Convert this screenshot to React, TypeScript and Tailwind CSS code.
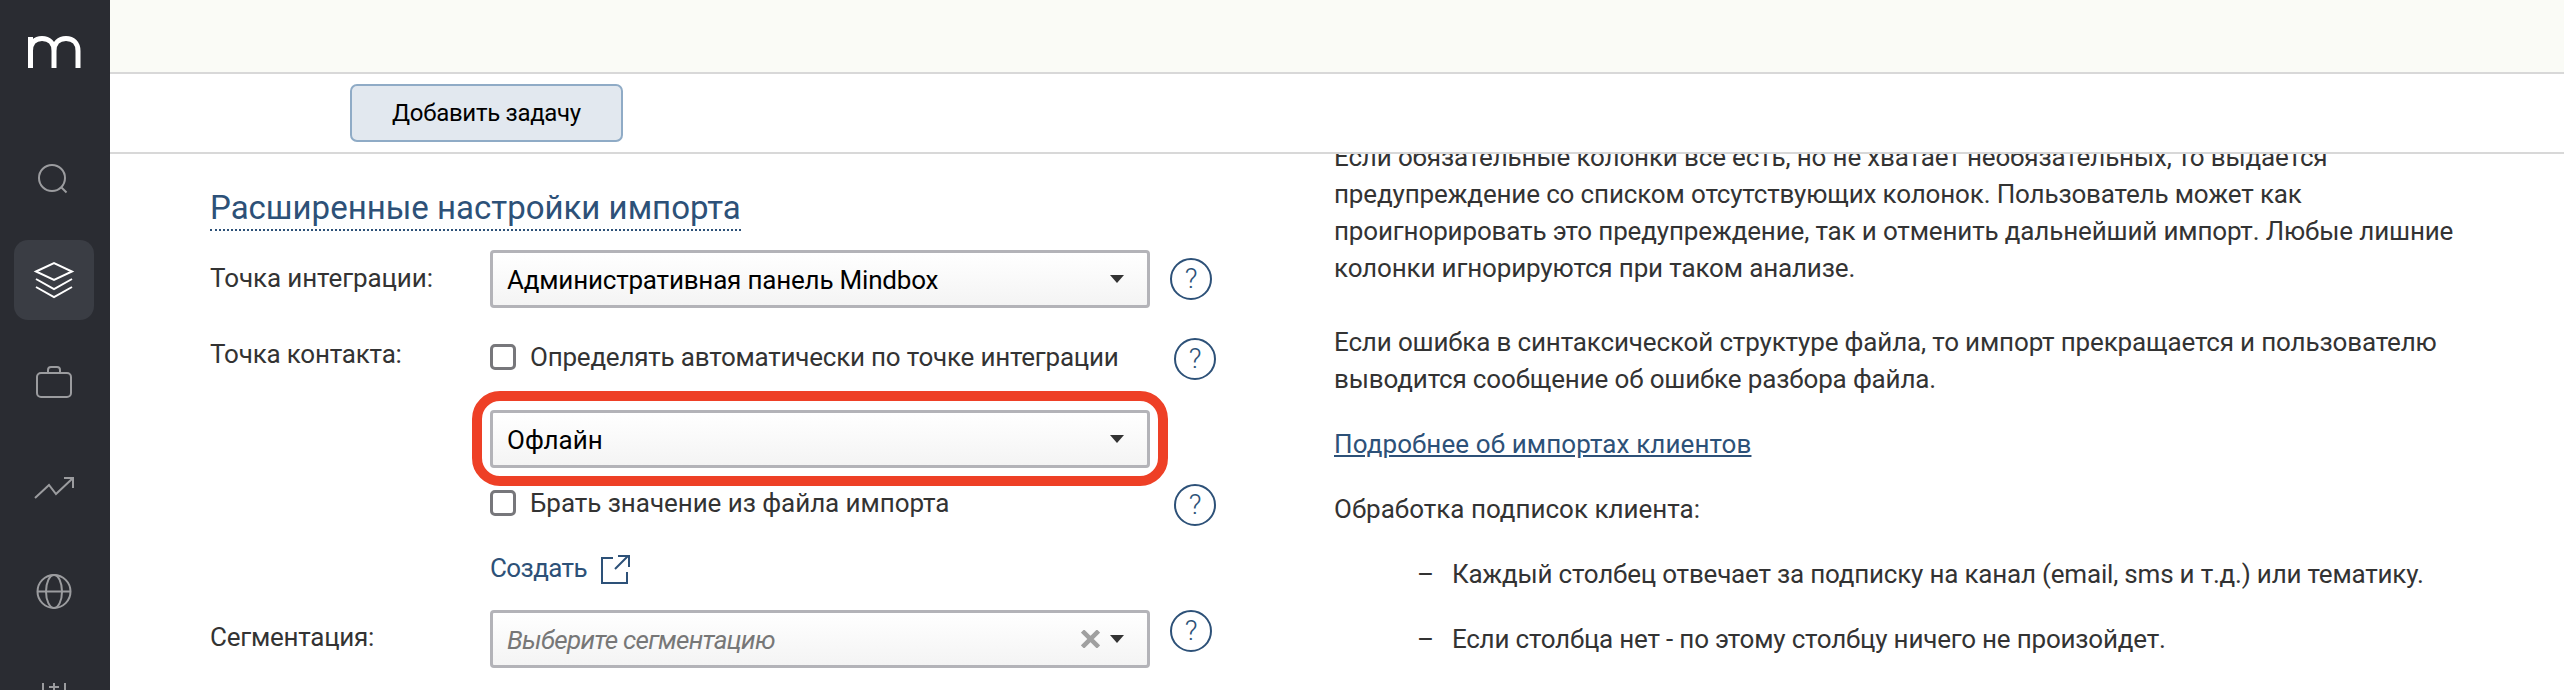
import React from "react";

const font = { fontFamily: '"Roboto", "Liberation Sans", sans-serif' };

function Help({ nudge }: { nudge?: boolean }) {
  return (
    <span className={`flex h-[42px] w-[42px] shrink-0 items-center justify-center rounded-full border-[2.5px] border-[#2d5178] text-[28px] font-light leading-none text-[#2d5178] ${nudge ? "ml-[24px]" : "ml-[20px]"}`}>
      ?
    </span>
  );
}

function Caret() {
  return <span className="h-0 w-0 border-x-[7px] border-t-[8px] border-x-transparent border-t-[#333]" />;
}

function Select({ text, placeholder, clear, tight }: { text: string; placeholder?: boolean; clear?: boolean; tight?: boolean }) {
  return (
    <div className="flex h-[58px] w-[660px] items-center justify-between rounded-[4px] border-[3px] border-[#b3b3b8] bg-gradient-to-b from-white to-[#f4f4f4] pl-[14px] pr-[23px]">
      <span className={`pt-[2px] ${placeholder ? "italic tracking-[-0.7px] text-[#777]" : "text-black"} ${tight ? "tracking-[-0.2px]" : ""}`}>{text}</span>
      <span className="flex items-center gap-[10px]">
        {clear && (
          <svg width="19" height="18" viewBox="0 0 19 18" fill="none" stroke="#a0a0a0" strokeWidth="4.5">
            <path d="M1.5 1l16 16M17.5 1l-16 16" />
          </svg>
        )}
        <Caret />
      </span>
    </div>
  );
}

function Check({ label, tight }: { label: string; tight?: boolean }) {
  return (
    <label className={`mt-[6px] flex h-[26px] w-[660px] items-center gap-[14px] text-[#333] ${tight ? "tracking-[-0.22px]" : "tracking-[-0.05px]"}`}>
      <span className="h-[26px] w-[26px] shrink-0 rounded-[5px] border-[3px] border-[#77777b] bg-white" />
      {label}
    </label>
  );
}

function NavItem({ children, active }: { children: React.ReactNode; active?: boolean }) {
  return (
    <div className={`h-[80px] w-[80px] shrink-0 rounded-[14px] ${active ? "bg-[#3a3d44]" : ""}`}>
      <svg width="80" height="80" viewBox="0 0 80 80" fill="none" stroke={active ? "#ffffff" : "#9b9c9f"} strokeWidth="2">
        {children}
      </svg>
    </div>
  );
}

export default function App() {
  return (
    <div className="flex h-screen w-screen overflow-hidden bg-white text-[26px] leading-[37px] text-[#333]" style={font}>
      <aside className="flex h-full w-[110px] shrink-0 flex-col items-start overflow-hidden bg-[#2a2c32] pl-[14px]">
        <div className="h-[137px] w-[80px] shrink-0 pl-[13px] pt-[35px]">
          <svg width="54" height="33" viewBox="0 0 54 33" fill="none" stroke="#fff" strokeWidth="5">
            <path d="M3.5 33V2M3.5 16C3.5 8 8 3.500 15 3.500s12 4.500 12 12.500v17M27 16c0-8 5-12.500 12-12.500s12 4.500 12 12.500v17" />
          </svg>
        </div>
        <div className="flex flex-col gap-[23px]">
          <NavItem>
            <circle cx="38" cy="41" r="13" />
            <path d="M47.5 50.5l5 5" />
          </NavItem>
          <NavItem active>
            <path d="M22 31.5L40 23l18 8.5L40 40z" />
            <path d="M22 39l18 10 18-10M22 47l18 10 18-10" />
          </NavItem>
          <NavItem>
            <rect x="23" y="30" width="34" height="24" rx="4" />
            <path d="M34 30v-3a3 3 0 0 1 3-3h6a3 3 0 0 1 3 3v3" />
          </NavItem>
          <NavItem>
            <path d="M21 52l14-13 7 9 17-16M50 32h9v10" />
          </NavItem>
          <NavItem>
            <circle cx="40" cy="42.5" r="16.5" />
            <ellipse cx="40" cy="42.5" rx="8" ry="16.5" />
            <path d="M23.5 42.5h33" />
          </NavItem>
          <NavItem>
            <path d="M29 31v49M40 31v49M51 31v49M35 35h10" />
          </NavItem>
        </div>
      </aside>

      <main className="flex min-w-0 flex-1 flex-col">
        <div className="h-[74px] shrink-0 border-b-[2px] border-[#d8d8d8] bg-[#fafbf6]" />
        <div className="flex h-[80px] shrink-0 items-center border-b-[2px] border-[#d8d8d8] pl-[240px]">
          <button className="h-[58px] w-[273px] rounded-[7px] border-[2px] border-[#8fabc6] bg-[#e2e8ef] text-[24px] tracking-[-0.3px] text-black">
            Добавить задачу
          </button>
        </div>
        <div className="flex min-h-0 flex-1 overflow-hidden">
          <section className="w-[1224px] shrink-0 pl-[100px] pt-[33px]">
            <h2 className="mb-[19px] w-fit border-b-[2px] border-dotted border-[#2d5178] text-[33px] leading-[42px] text-[#2d5178]">
              Расширенные настройки импорта
            </h2>
            <div className="grid grid-cols-[280px_1fr] items-start">
              <div className="pt-[10px] tracking-[-0.1px]">Точка интеграции:</div>
              <div className="flex items-center">
                <Select text="Административная панель Mindbox" tight />
                <Help />
              </div>
              <div className="mt-[28px] tracking-[-0.2px]">Точка контакта:</div>
              <div className="mt-[30px] flex flex-col">
                <div className="flex items-start">
                  <Check label="Определять автоматически по точке интеграции" tight />
                  <Help nudge />
                </div>
                <div className="relative mt-[30px]">
                  <Select text="Офлайн" />
                  <div className="absolute -bottom-[18px] -left-[18px] -top-[19px] w-[696px] rounded-[28px] border-[10px] border-[#ee4026]" />
                </div>
                <div className="mt-[16px] flex items-start">
                  <Check label="Брать значение из файла импорта" />
                  <Help nudge />
                </div>
                <div className="mt-[24px] flex items-center gap-[14px] tracking-[-0.6px] text-[#2d5178]">
                  Создать
                  <svg width="30" height="30" viewBox="0 0 30 30" fill="none" stroke="#2d5178" strokeWidth="2">
                    <path d="M12 4H1v25h25V18M14 15L27 2M17 2h11v11" />
                  </svg>
                </div>
              </div>
              <div className="mt-[32px] tracking-[-0.25px]">Сегментация:</div>
              <div className="mt-[23px] flex items-start">
                <Select text="Выберите сегментацию" placeholder clear />
                <Help />
              </div>
            </div>
          </section>
          <section className="-mt-[15px] min-w-0 flex-1">
            <p className="tracking-[-0.15px]">
              Если обязательные колонки все есть, но не хватает необязательных, то выдается
              <br />
              предупреждение со списком отсутствующих колонок. Пользователь может как
              <br />
              проигнорировать это предупреждение, так и отменить дальнейший импорт. Любые лишние
              <br />
              колонки игнорируются при таком анализе.
              <br />
              <br />
              Если ошибка в синтаксической структуре файла, то импорт прекращается и пользователю
              <br />
              выводится сообщение об ошибке разбора файла.
            </p>
            <p className="mt-[28px]">
              <a className="tracking-[0.1px] text-[#2d5178] underline">Подробнее об импортах клиентов</a>
            </p>
            <p className="mt-[28px]">Обработка подписок клиента:</p>
            <ul className="mt-[28px] flex flex-col gap-[28px] pl-[83px] tracking-[-0.2px]">
              <li className="flex gap-[18px]">
                <span>–</span>Каждый столбец отвечает за подписку на канал (email, sms и т.д.) или тематику.
              </li>
              <li className="flex gap-[18px]">
                <span>–</span>Если столбца нет - по этому столбцу ничего не произойдет.
              </li>
            </ul>
          </section>
        </div>
      </main>
    </div>
  );
}
